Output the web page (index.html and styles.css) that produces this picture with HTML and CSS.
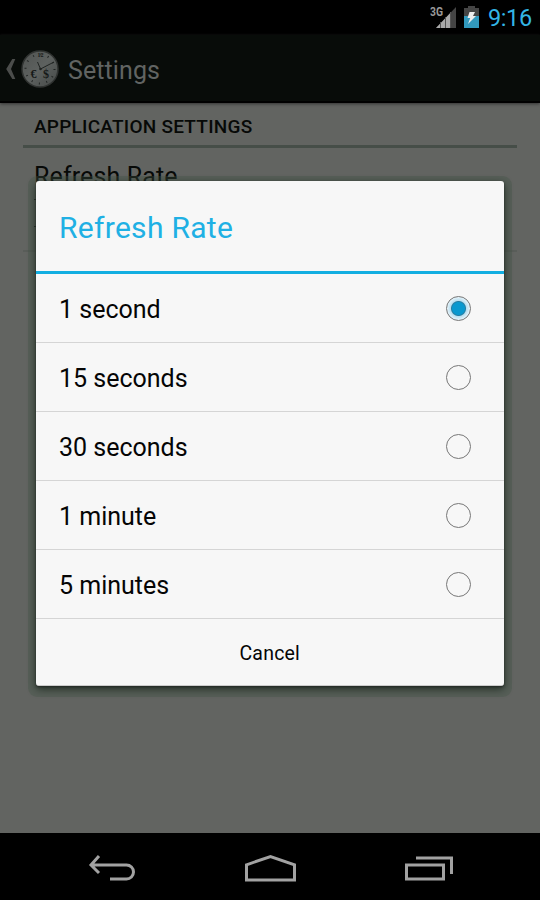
FILE: index.html
```
<!DOCTYPE html>
<html lang="en">
<head>
<meta charset="utf-8">
<title>Settings</title>
<link rel="stylesheet" href="styles.css">
</head>
<body>
<div class="screen">
  <header class="status">
    <svg class="signal" width="28" height="24" viewBox="0 0 28 24">
      <path d="M6 23 26 2v21z" fill="#444"/>
      <path d="M6 23 21 7.300V23z" fill="#aaa"/>
      <path d="M10.500 17v6M15.500 12v11M20.500 7v16" stroke="#555" stroke-width="1"/>
      <text x="0" y="11" class="network" textLength="13" lengthAdjust="spacingAndGlyphs">3G</text>
    </svg>
    <svg class="battery" width="15" height="22" viewBox="0 0 15 22">
      <path d="M0 2h4V0h7v2h4v8H0z" fill="#454545"/>
      <path d="M0 10h15v12H0z" fill="#3299bd"/>
      <path d="M5.500 6h5.500L9 10h3l-8 8 2.200-6H3.500z" fill="#eee"/>
    </svg>
    <span class="time">9:16</span>
  </header>
  <div class="actionbar">
    <svg class="up" width="11" height="20" viewBox="0 0 11 20"><path d="M10.300 0 6 10 10.300 20H7.300L1.200 10 7.300 0z" fill="#4b4d4b"/></svg>
    <svg class="clock" width="38" height="38" viewBox="0 0 38 38">
      <defs><linearGradient id="face" x1="0" y1="0" x2="1" y2="1"><stop offset="0" stop-color="#505351"/><stop offset=".5" stop-color="#5d615f"/><stop offset="1" stop-color="#454947"/></linearGradient></defs>
      <circle cx="19" cy="19" r="18" fill="url(#face)" stroke="#303331" stroke-width="1.500"/>
      <circle cx="19" cy="19" r="14.500" fill="none" stroke="#222624" stroke-width="2" stroke-dasharray="1 6.592"/>
      <path d="M19.500 19 16.500 12M19.500 19 33 12" stroke="#202422" stroke-width="1"/>
      <circle cx="19.500" cy="19" r="1.300" fill="#202422"/>
      <text x="19.500" y="7" class="hour">12</text>
      <text x="12.500" y="28" class="currency">€</text>
      <text x="25" y="28" class="currency">$</text>
    </svg>
    <h1>Settings</h1>
  </div>
  <main class="content">
    <h2>APPLICATION SETTINGS</h2>
    <div class="preference">Refresh Rate<i class="trace"></i><i class="trace"></i></div>
  </main>
  <nav class="navbar">
    <svg width="48" height="28" viewBox="0 0 48 28" fill="none" stroke="#a2a2a2" stroke-width="3"><path d="M11 2 3 11l8 8M3.500 11h35a7 7 0 0 1 0 14H22"/></svg>
    <svg width="52" height="28" viewBox="0 0 52 28" fill="none" stroke="#a2a2a2" stroke-width="3"><path d="M1.500 10.800 25.500 2.500l24 8.300V26h-48z"/></svg>
    <svg width="49" height="27" viewBox="0 0 49 27" fill="none" stroke="#a2a2a2" stroke-width="3"><path d="M1.500 11h37v14h-37zM11 4h35.500v16"/></svg>
  </nav>
  <section class="dialog">
    <h3>Refresh Rate</h3>
    <div class="option"><span>1 second</span><i class="radio selected"></i></div>
    <div class="option"><span>15 seconds</span><i class="radio"></i></div>
    <div class="option"><span>30 seconds</span><i class="radio"></i></div>
    <div class="option"><span>1 minute</span><i class="radio"></i></div>
    <div class="option"><span>5 minutes</span><i class="radio"></i></div>
    <div class="cancel">Cancel</div>
  </section>
</div>
</body>
</html>
```
FILE: styles.css
```
* { box-sizing: border-box; }
body { margin: 0; font-family: Roboto, "Liberation Sans", sans-serif; }
h1, h2, h3 { margin: 0; font-weight: 400; }
.screen { position: relative; width: 540px; height: 900px; overflow: hidden; display: flex; flex-direction: column; background: #626461; }
.status { height: 35px; flex: none; background: #000; display: flex; justify-content: flex-end; align-items: flex-start; padding-right: 8px; }
.signal { margin: 5px 6px 0 0; }
.network { font-size: 12px; font-weight: 700; fill: #999; }
.battery { margin: 6px 9px 0 0; }
.time { width: 44px; font-size: 23.5px; line-height: 37px; letter-spacing: -0.4px; color: #33b5e5; white-space: nowrap; }
.actionbar { height: 68px; flex: none; background: #080c09; border-bottom: 2px solid #000; display: flex; align-items: center; padding: 2px 0 0 5px; box-shadow: 0 1px 3px #333; }
.clock { margin-left: 5px; }
.hour { font: 700 6px "Liberation Serif", serif; text-anchor: middle; fill: #151817; }
.currency { font: 700 12px "Liberation Serif", serif; text-anchor: middle; fill: #151817; }
h1 { margin: 3px 0 0 9px; font-size: 25px; letter-spacing: 0.1px; color: #616462; }
.content { flex: 1; padding: 0 23px; color: #070907; }
h2 { height: 45px; padding: 0 11px; border-bottom: 3px solid #464e48; font-size: 19px; font-weight: 500; line-height: 47px; letter-spacing: 0.24px; }
.preference { height: 104px; padding: 12px 11px; border-bottom: 2px solid #595d59; font-size: 25px; line-height: 34px; letter-spacing: 0.12px; }
.trace { display: block; width: 2px; height: 1px; margin-top: 5px; background: #1c201d; }
.trace + .trace { margin-top: 26px; }
.navbar { height: 67px; flex: none; background: #000; display: flex; justify-content: space-between; align-items: flex-start; padding: 21px 86px 0 88px; }
.dialog { position: absolute; left: 36px; top: 181px; width: 467.5px; height: 505px; background: #f7f7f7; border-radius: 3px; border-bottom: 1px solid #ccc; box-shadow: 0 1px 2px #252a26, 0 3px 8px rgba(15, 28, 18, .75), 0 3px 0 8px rgba(70, 85, 73, .35); color: #050505; }
h3 { height: 93px; padding: 0 23px; border-bottom: 3px solid #12aee1; font-size: 30px; line-height: 94px; letter-spacing: 0.3px; color: #20b0e4; }
.option { height: 69px; display: flex; align-items: center; justify-content: space-between; padding: 0 33px 0 23px; border-bottom: 1px solid #d5d5d5; font-size: 25px; }
.option span { padding-top: 3px; }
.radio { width: 25px; height: 25px; border: 1px solid #777; border-radius: 50%; }
.selected { background: radial-gradient(circle, #0898cf 0 6px, #267da2 7px, #b9dff0 8px, #e1f1f9 11px); }
.cancel { height: 67px; text-align: center; font-size: 19.5px; line-height: 70px; letter-spacing: 0.2px; }
```
